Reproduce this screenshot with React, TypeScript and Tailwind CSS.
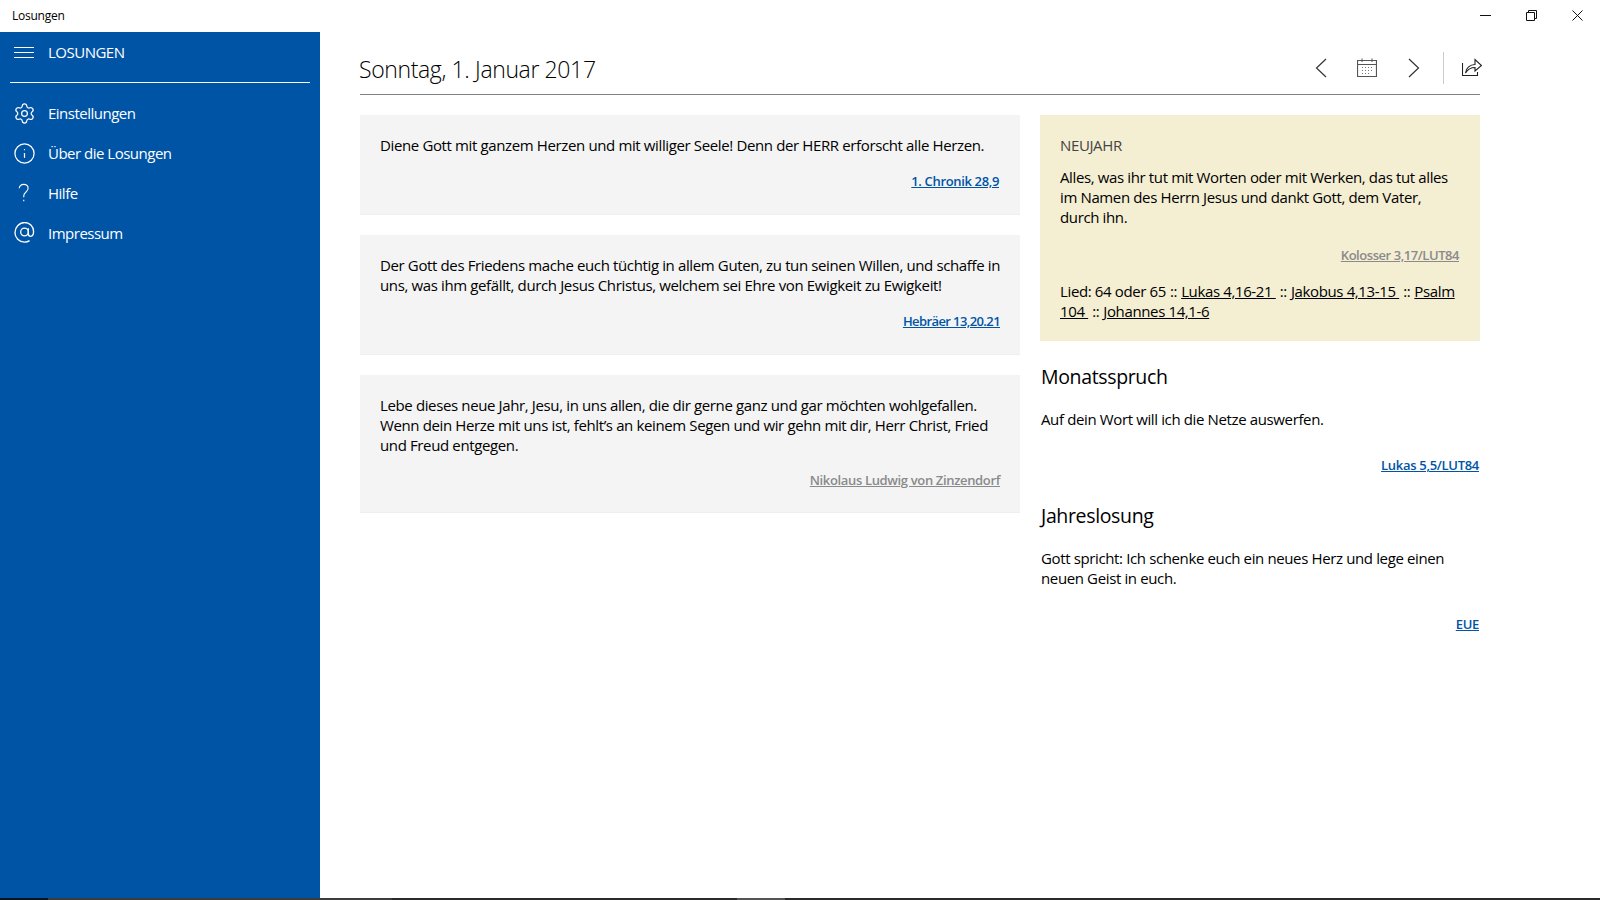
import React from 'react';
import { Settings, Info } from 'lucide-react';

const font = "font-['Open_Sans','Noto_Sans',sans-serif]";
const body = 'text-[15px] leading-[20px] tracking-[-0.37px]';

const Ref = ({ children, gray, className }: { children: React.ReactNode; gray?: boolean; className?: string }) => (
  <div className={`text-right ${className}`}>
    <a className={`text-[13px] font-semibold underline leading-[20px] ${gray ? 'text-[#8a8a8a]' : 'text-[#0054a6]'}`}>{children}</a>
  </div>
);

const Card = ({ children, className }: { children: React.ReactNode; className?: string }) => (
  <div className={`bg-[#f4f4f4] border-b border-[#efefef] px-[20px] pt-[20px] ${className}`}>{children}</div>
);

const NavItem = ({ icon, label }: { icon: React.ReactNode; label: string }) => (
  <div className="flex items-center h-[40px]">
    <div className="w-[48px] flex justify-center">{icon}</div>
    <span className="text-[15px] tracking-[-0.5px]">{label}</span>
  </div>
);

const Sep = () => <span className="mx-[4px]">::</span>;

export default function App() {
  return (
    <div className={`w-[1600px] h-[900px] overflow-hidden flex flex-col bg-white text-black ${font}`}>
      {/* title bar */}
      <div className="h-[32px] flex items-center justify-between shrink-0">
        <span className="pl-[12px] text-[12px] tracking-[-0.25px]">Losungen</span>
        <div className="flex">
          <div className="w-[46px] h-[32px] flex items-center justify-center">
            <svg width="11" height="11" viewBox="0 0 11 11" className="-mt-px"><path d="M0 5.5h11" stroke="#111" /></svg>
          </div>
          <div className="w-[46px] h-[32px] flex items-center justify-center">
            <svg width="11" height="11" viewBox="0 0 11 11" fill="none" stroke="#111" className="-mt-px"><path d="M.5 2.5h8v8h-8zM2.5 2.5v-2h8v8h-2" /></svg>
          </div>
          <div className="w-[46px] h-[32px] flex items-center justify-center">
            <svg width="11" height="11" viewBox="0 0 11 11" fill="none" stroke="#111" className="-mt-px"><path d="M.5.5l10 10M10.5.5l-10 10" /></svg>
          </div>
        </div>
      </div>

      <div className="flex flex-1 min-h-0">
        {/* sidebar */}
        <aside className="w-[320px] shrink-0 bg-[#0054a6] text-white">
          <div className="flex items-center h-[41px]">
            <div className="w-[48px] flex justify-center">
              <svg width="20" height="12" viewBox="0 0 20 12" stroke="white"><path d="M0 .5h20M0 5.5h20M0 10.5h20" /></svg>
            </div>
            <span className="text-[15px] tracking-[-0.5px]">LOSUNGEN</span>
          </div>
          <div className="mx-[10px] mt-[9px] mb-[10px] h-px bg-white" />
          <NavItem icon={<Settings size={23} strokeWidth={1.3} />} label="Einstellungen" />
          <NavItem icon={<Info size={23} strokeWidth={1.3} />} label="Über die Losungen" />
          <NavItem
            icon={
              <svg width="12" height="20" viewBox="0 0 14 22" fill="none" stroke="white" strokeWidth="1.3">
                <path d="M1.5 5.5C1.5 2.7 3.8 1 6.6 1c3 0 5.2 2 5.2 4.6 0 2.2-1.2 3.3-2.7 4.5C7.6 11.3 6.7 12.3 6.7 14.5v1.5" />
                <path d="M6.7 19v1.5" />
              </svg>
            }
            label="Hilfe"
          />
          <NavItem
            icon={
              <svg width="21" height="21" viewBox="0 0 22 22" fill="none" stroke="white" strokeWidth="1.4" className="-mt-px">
                <circle cx="11" cy="10.5" r="4" />
                <path d="M15 6.5V12c0 2 1 3 2.5 3s3-1.5 3-5c0-5.5-4.3-9.500-9.500-9.500S1 5.500 1 11s4.300 10 10 10c2.200 0 3.800-.5 5.300-1.500" />
              </svg>
            }
            label="Impressum"
          />
        </aside>

        {/* content */}
        <main className="flex-1 pl-[40px] pr-[120px] min-w-0">
          <header className="h-[63px] flex items-end justify-between border-b border-[#808080]">
            <h1 className="text-[23px] tracking-[-0.37px] font-light pb-[8px] -ml-px">Sonntag, 1. Januar 2017</h1>
            <div className="flex items-center h-[32px] mb-[10px] mr-[-2px]">
              <svg width="12" height="20" viewBox="0 0 12 20" fill="none" stroke="#333" strokeWidth="1.2" className="mr-[30px]"><path d="M11 1L1.5 10 11 19" /></svg>
              <svg width="20" height="20" viewBox="0 0 20 20" fill="none" stroke="#555" className="mr-[31px]">
                <path d="M.5 2.5h19v16H.5zM.5 6.5h19" strokeWidth="1.2" />
                <path d="M5 .5V4M15 .5V4" />
                <path d="M5 9.5h10M5 12.500h10M5 15.500h7" strokeDasharray="1 2" stroke="#777" />
              </svg>
              <svg width="12" height="20" viewBox="0 0 12 20" fill="none" stroke="#333" strokeWidth="1.2" className="mr-[23px]"><path d="M1 1l9.5 9L1 19" /></svg>
              <div className="w-px h-[32px] bg-[#cccccc] mr-[18px]" />
              <svg width="20" height="18" viewBox="0 0 20 18" fill="none" stroke="#222" strokeWidth="1.1" className="-mt-[2px]">
                <path d="M.5 5v12.500h15V14" />
                <path d="M3.500 15C4 10 8 6.500 13 6.500v-5l6.500 6-6.500 5.500V9.500c-4 0-7 1.500-9.500 5.500z" />
              </svg>
            </div>
          </header>

          <div className="flex gap-[20px] mt-[20px]">
            <div className="w-[660px] flex flex-col gap-[20px]">
              <Card className="h-[100px]">
                <p className={body}>Diene Gott mit ganzem Herzen und mit williger Seele! Denn der HERR erforscht alle Herzen.</p>
                <Ref className="mt-[13px] tracking-[-0.35px] pr-px">1. Chronik 28,9</Ref>
              </Card>
              <Card className="h-[120px]">
                <p className={body}>Der Gott des Friedens mache euch tüchtig in allem Guten, zu tun seinen Willen, und schaffe in uns, was ihm gefällt, durch Jesus Christus, welchem sei Ehre von Ewigkeit zu Ewigkeit!</p>
                <Ref className="mt-[13px] tracking-[-0.6px]">Hebräer 13,20.21</Ref>
              </Card>
              <Card className="h-[138px]">
                <p className={body}>Lebe dieses neue Jahr, Jesu, in uns allen, die dir gerne ganz und gar möchten wohlgefallen. Wenn dein Herze mit uns ist, fehlt’s an keinem Segen und wir gehn mit dir, Herr Christ, Fried und Freud entgegen.</p>
                <Ref gray className="mt-[12px] tracking-[-0.35px]">Nikolaus Ludwig von Zinzendorf</Ref>
              </Card>
            </div>

            <div className="w-[440px]">
              <div className={`bg-[#f4eed3] h-[226px] px-[20px] pt-[20px] ${body}`}>
                <div className="text-[#444]">NEUJAHR</div>
                <p className="mt-[12px]">Alles, was ihr tut mit Worten oder mit Werken, das tut alles im Namen des Herrn Jesus und dankt Gott, dem Vater, durch ihn.</p>
                <Ref gray className="mt-[17px] tracking-[-0.45px] pr-px">Kolosser 3,17/LUT84</Ref>
                <p className="mt-[16px]">Lied: 64 oder 65<Sep /><a className="underline whitespace-pre">Lukas 4,16-21 </a><Sep /><a className="underline whitespace-pre">Jakobus 4,13-15 </a><Sep /><a className="underline">Psalm</a> <a className="underline">104&nbsp;</a><Sep /><a className="underline">Johannes 14,1-6</a></p>
              </div>
              <div className="pl-[1px] pr-[1px]">
                <h2 className="text-[19.5px] leading-[28px] mt-[22px] tracking-[-0.35px]">Monatsspruch</h2>
                <p className={`mt-[18px] ${body}`}>Auf dein Wort will ich die Netze auswerfen.</p>
                <Ref className="mt-[23px] tracking-[-0.3px]">Lukas 5,5/LUT84</Ref>
                <h2 className="text-[19.5px] leading-[28px] mt-[26px] tracking-[-0.35px]">Jahreslosung</h2>
                <p className={`mt-[18px] pr-[20px] ${body}`}>Gott spricht: Ich schenke euch ein neues Herz und lege einen neuen Geist in euch.</p>
                <Ref className="mt-[23px] tracking-[-0.3px]">EUE</Ref>
              </div>
            </div>
          </div>
        </main>
      </div>

      {/* taskbar strip at the bottom edge */}
      <div className="h-[2px] shrink-0 flex bg-[#2a2a2a]">
        <div className="w-[48px] bg-[#0a1420]" />
        <div className="w-[344px] bg-[#3c3c3c]" />
        <div className="w-[345px]" />
        <div className="w-[48px] bg-[#555555]" />
      </div>
    </div>
  );
}
